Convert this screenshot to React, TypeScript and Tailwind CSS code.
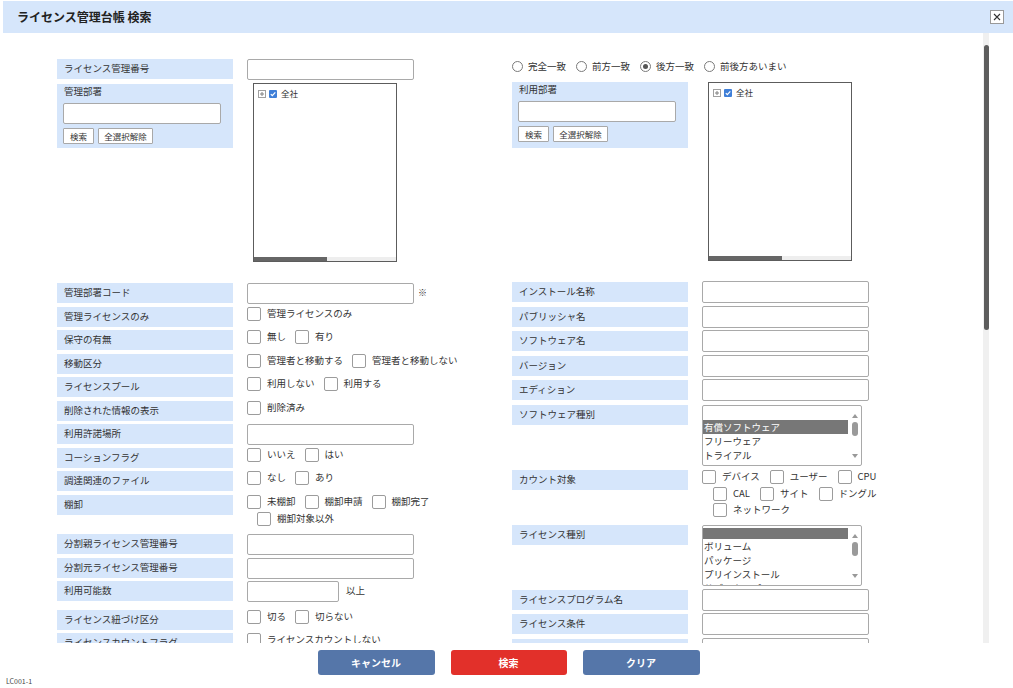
import type { ReactNode } from 'react';

function Label({ children, className = '' }: { children: ReactNode; className?: string }) {
  return (
    <div
      className={`w-[176px] h-[20px] shrink-0 bg-[#d6e6fb] pl-[7px] flex items-center text-[9.5px] leading-none text-[#333] whitespace-nowrap ${className}`}
    >
      {children}
    </div>
  );
}

function TextBox({ className = '' }: { className?: string }) {
  return (
    <input
      type="text"
      readOnly
      className={`w-[167px] h-[21px] shrink-0 border border-[#a9a9a9] rounded-[2px] bg-white outline-none ${className}`}
    />
  );
}

function Check({ label }: { label: string }) {
  return (
    <div className="flex items-center gap-[6px] h-[14px]">
      <span className="w-[14px] h-[14px] shrink-0 border border-[#9c9c9c] rounded-[2px] bg-white" />
      <span className="text-[9.5px] leading-none text-[#333] whitespace-nowrap">{label}</span>
    </div>
  );
}

function Checks({ items, className = '' }: { items: string[]; className?: string }) {
  return (
    <div className={`flex items-center gap-[9px] ${className}`}>
      {items.map((t) => (
        <Check key={t} label={t} />
      ))}
    </div>
  );
}

function Row({ label, children, className = 'h-[20px] mt-[3.5px]' }: { label: string; children?: ReactNode; className?: string }) {
  return (
    <div className={`flex items-start shrink-0 ${className}`}>
      <Label>{label}</Label>
      <div className="ml-[14px] flex items-start">{children}</div>
    </div>
  );
}

function RRow({ label, children, className = 'h-[22px] mt-[2.5px]' }: { label: string; children?: ReactNode; className?: string }) {
  return (
    <div className={`flex items-start shrink-0 ${className}`}>
      <Label className="mt-[1px]">{label}</Label>
      <div className="ml-[14px] flex items-start">{children}</div>
    </div>
  );
}

function SmallButton({ children, className = '' }: { children: ReactNode; className?: string }) {
  return (
    <button
      type="button"
      className={`h-[16px] border border-[#a8a8a8] rounded-[1px] bg-white text-[8.5px] leading-none text-[#333] flex items-center justify-center ${className}`}
    >
      {children}
    </button>
  );
}

function DeptBox({ title, className = '' }: { title: string; className?: string }) {
  return (
    <div className={`w-[176px] shrink-0 bg-[#d6e6fb] px-[6px] pt-[1px] flex flex-col ${className}`}>
      <div className="pl-[1px] h-[14px] flex items-center text-[9.5px] leading-none text-[#333]">{title}</div>
      <input
        type="text"
        readOnly
        className="mt-[4px] w-[158px] h-[21px] border border-[#a9a9a9] rounded-[2px] bg-white outline-none"
      />
      <div className="mt-[4px] flex gap-[4px]">
        <SmallButton className="w-[31px]">検索</SmallButton>
        <SmallButton className="w-[55px]">全選択解除</SmallButton>
      </div>
    </div>
  );
}

function Tree({ className = '' }: { className?: string }) {
  return (
    <div className={`w-[144px] h-[179px] shrink-0 border border-[#5c5c5c] bg-white flex flex-col ${className}`}>
      <div className="flex-1 pt-[5px] pl-[4px]">
        <div className="flex items-center h-[9px] gap-[3px]">
          <svg width="8" height="8" viewBox="0 0 8 8">
            <rect x="0.5" y="0.5" width="7" height="7" fill="#fff" stroke="#a0a0a0" />
            <path d="M2 4h4M4 2v4" stroke="#808080" strokeWidth="1" />
          </svg>
          <svg width="8" height="8" viewBox="0 0 8 8">
            <rect x="0" y="0" width="8" height="8" rx="1" fill="#3f7fd8" />
            <path d="M1.8 4.1l1.5 1.5 3-3.3" stroke="#fff" strokeWidth="1.2" fill="none" />
          </svg>
          <span className="ml-[1px] text-[8.5px] leading-none text-[#333]">全社</span>
        </div>
      </div>
      <div className="h-[4px] bg-[#eeeeee] flex">
        <div className="w-[73px] bg-[#666]" />
      </div>
    </div>
  );
}

function Arrow({ up }: { up?: boolean }) {
  return (
    <svg width="6" height="4" viewBox="0 0 6 4">
      <path d={up ? 'M0 4L3 0L6 4Z' : 'M0 0L3 4L6 0Z'} fill="#999" />
    </svg>
  );
}

function ListBox({ items, selected, firstShort }: { items: string[]; selected: number; firstShort?: boolean }) {
  return (
    <div className="mt-[1px] w-[160px] h-[61px] border border-[#a9a9a9] rounded-[2px] bg-white flex overflow-hidden">
      <div className="flex-1 flex flex-col">
        {items.map((t, i) => (
          <div
            key={i}
            className={`shrink-0 pl-[1px] text-[9.5px] leading-[14px] whitespace-nowrap ${
              i === 0 && firstShort ? 'mt-[2px] h-[11px]' : 'h-[14px]'
            } ${i === selected ? 'bg-[#777] text-white' : 'text-[#333]'}`}
          >
            {t}
          </div>
        ))}
      </div>
      <div className="w-[13px] flex flex-col items-center pt-[8px] pb-[7px]">
        <Arrow up />
        <div className="mt-[4px] w-[6px] h-[14px] rounded-full bg-[#9a9a9a]" />
        <div className="flex-1" />
        <Arrow />
      </div>
    </div>
  );
}

function Radio({ label, checked }: { label: string; checked?: boolean }) {
  return (
    <div className="flex items-center gap-[5px]">
      <span className="w-[11px] h-[11px] rounded-full border border-[#7a7a7a] bg-white flex items-center justify-center">
        {checked && <span className="w-[5px] h-[5px] rounded-full bg-[#555]" />}
      </span>
      <span className="text-[9.5px] leading-none text-[#333] whitespace-nowrap">{label}</span>
    </div>
  );
}

export default function App() {
  return (
    <div className="w-[1013px] h-[688px] bg-white flex flex-col overflow-hidden font-['Noto_Sans_CJK_JP',sans-serif]">
      {/* header */}
      <div className="ml-[3px] mt-[1px] h-[32px] shrink-0 bg-[#d6e6fb] flex items-center justify-between pl-[14px] pr-[9px]">
        <h1 className="text-[12px] font-bold text-[#222] leading-none">ライセンス管理台帳 検索</h1>
        <button
          type="button"
          className="w-[14px] h-[14px] border border-[#999] bg-white flex items-center justify-center"
        >
          <svg width="8" height="8" viewBox="0 0 8 8">
            <path d="M1 1L7 7M7 1L1 7" stroke="#333" strokeWidth="1.1" />
          </svg>
        </button>
      </div>

      {/* body */}
      <div className="h-[610px] shrink-0 flex overflow-hidden">
        <div className="w-[983px] flex pt-[26px] pl-[57px]">
          {/* left column */}
          <div className="w-[455px] flex flex-col">
            <div className="flex items-start h-[21px] shrink-0">
              <Label>ライセンス管理番号</Label>
              <TextBox className="ml-[14px]" />
            </div>
            <div className="flex items-start mt-[3px] shrink-0">
              <DeptBox title="管理部署" className="mt-[1px] h-[64px]" />
              <Tree className="ml-[20px]" />
            </div>
            <Row label="管理部署コード" className="h-[20px] mt-[21px]">
              <TextBox />
              <span className="ml-[4px] mt-[5px] text-[9px] leading-none text-[#333]">※</span>
            </Row>
            <Row label="管理ライセンスのみ">
              <Checks items={['管理ライセンスのみ']} />
            </Row>
            <Row label="保守の有無">
              <Checks items={['無し', '有り']} />
            </Row>
            <Row label="移動区分">
              <Checks items={['管理者と移動する', '管理者と移動しない']} />
            </Row>
            <Row label="ライセンスプール">
              <Checks items={['利用しない', '利用する']} />
            </Row>
            <Row label="削除された情報の表示">
              <Checks items={['削除済み']} />
            </Row>
            <Row label="利用許諾場所">
              <TextBox />
            </Row>
            <Row label="コーションフラグ">
              <Checks items={['いいえ', 'はい']} />
            </Row>
            <Row label="調達関連のファイル">
              <Checks items={['なし', 'あり']} />
            </Row>
            <Row label="棚卸" className="h-[36px] mt-[3.5px]">
              <div className="flex flex-col">
                <Checks items={['未棚卸', '棚卸申請', '棚卸完了']} className="h-[17px] !items-start" />
                <Checks items={['棚卸対象以外']} className="pl-[10px]" />
              </div>
            </Row>
            <Row label="分割親ライセンス管理番号">
              <TextBox />
            </Row>
            <Row label="分割元ライセンス管理番号">
              <TextBox />
            </Row>
            <Row label="利用可能数" className="h-[25px] mt-[3.5px]">
              <TextBox className="!w-[92px]" />
              <span className="ml-[7px] mt-[5px] text-[9.5px] leading-none text-[#333]">以上</span>
            </Row>
            <Row label="ライセンス紐づけ区分">
              <Checks items={['切る', '切らない']} />
            </Row>
            <Row label="ライセンスカウントフラグ">
              <Checks items={['ライセンスカウントしない']} />
            </Row>
          </div>

          {/* right column */}
          <div className="flex-1 flex flex-col">
            <div className="h-[20px] shrink-0 pt-[2px] flex items-start gap-[10px]">
              <Radio label="完全一致" />
              <Radio label="前方一致" />
              <Radio label="後方一致" checked />
              <Radio label="前後方あいまい" />
            </div>
            <div className="flex items-start mt-[3px] shrink-0">
              <DeptBox title="利用部署" className="h-[66px]" />
              <Tree className="ml-[20px]" />
            </div>
            <RRow label="インストール名称" className="h-[22px] mt-[20px]">
              <TextBox className="!h-[22px]" />
            </RRow>
            <RRow label="パブリッシャ名">
              <TextBox className="!h-[22px]" />
            </RRow>
            <RRow label="ソフトウェア名">
              <TextBox className="!h-[22px]" />
            </RRow>
            <RRow label="バージョン">
              <TextBox className="!h-[22px]" />
            </RRow>
            <RRow label="エディション">
              <TextBox className="!h-[22px]" />
            </RRow>
            <RRow label="ソフトウェア種別" className="h-[62px] mt-[2.5px]">
              <ListBox items={['', '有償ソフトウェア', 'フリーウェア', 'トライアル', 'シェアウェア']} selected={1} />
            </RRow>
            <RRow label="カウント対象" className="h-[52px] mt-[3px]">
              <div className="flex flex-col mt-[1px]">
                <div className="flex items-start gap-[10px] h-[17px]">
                  <Check label="デバイス" />
                  <Check label="ユーザー" />
                  <Check label="CPU" />
                </div>
                <div className="flex items-start gap-[10px] h-[16px] pl-[11px]">
                  <Check label="CAL" />
                  <Check label="サイト" />
                  <Check label="ドングル" />
                </div>
                <div className="flex items-start pl-[11px]">
                  <Check label="ネットワーク" />
                </div>
              </div>
            </RRow>
            <RRow label="ライセンス種別" className="h-[62px] mt-[3.5px]">
              <ListBox items={['', 'ボリューム', 'パッケージ', 'プリインストール', 'サブスクリプション']} selected={0} firstShort />
            </RRow>
            <RRow label="ライセンスプログラム名" className="h-[22px] mt-[2.5px]">
              <TextBox className="!h-[22px]" />
            </RRow>
            <RRow label="ライセンス条件">
              <TextBox className="!h-[22px]" />
            </RRow>
            <RRow label="ライセンス形態">
              <TextBox className="!h-[22px]" />
            </RRow>
          </div>
        </div>

        {/* scrollbar */}
        <div className="w-[6px] shrink-0 bg-[#f0f0f0] pt-[12px] flex justify-center">
          <div className="w-[5px] h-[285px] rounded-full bg-[#5d5d5d]" />
        </div>
      </div>

      {/* footer buttons */}
      <div className="mt-[7px] h-[25px] shrink-0 flex justify-center gap-[16px] pl-[4px]">
        <button type="button" className="w-[117px] h-[25px] rounded-[3px] bg-[#5576a9] text-white text-[10px] font-bold">
          キャンセル
        </button>
        <button type="button" className="w-[116px] h-[25px] rounded-[3px] bg-[#e2302a] text-white text-[10px] font-bold">
          検索
        </button>
        <button type="button" className="w-[117px] h-[25px] rounded-[3px] bg-[#5576a9] text-white text-[10px] font-bold">
          クリア
        </button>
      </div>
      <div className="mt-[2px] pl-[6px] text-[7px] leading-[8px] text-[#444]">LC001-1</div>
    </div>
  );
}
